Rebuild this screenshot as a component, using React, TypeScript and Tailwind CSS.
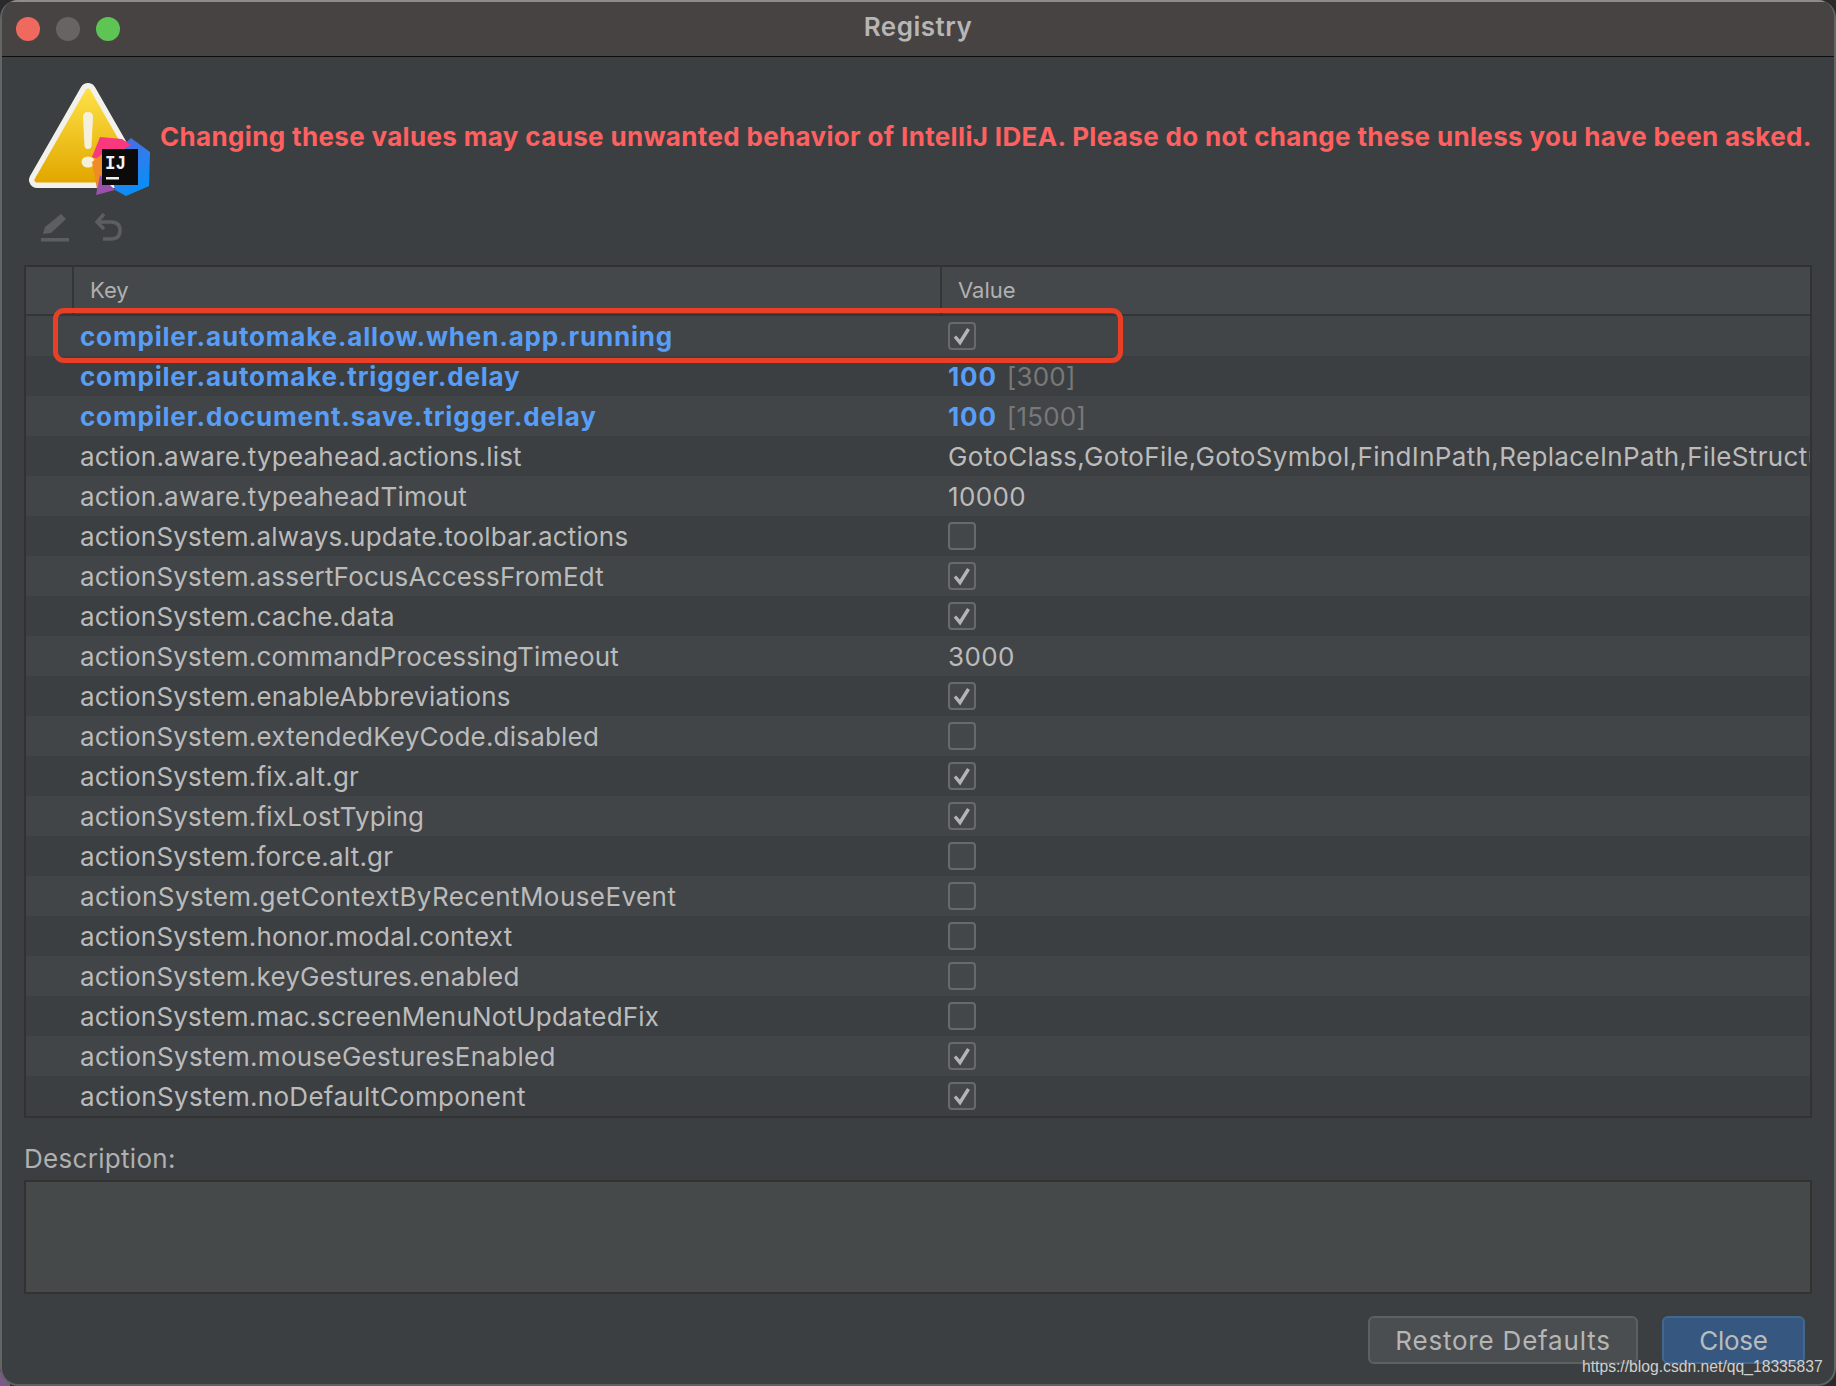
import React from 'react';

// Rows of the registry table
type Row = { key: string; value?: string; checked?: boolean; modified?: boolean; original?: string; track?: string };

const rows: Row[] = [
  { key: 'compiler.automake.allow.when.app.running', checked: true, modified: true },
  { key: 'compiler.automake.trigger.delay', value: '100', original: '[300]', modified: true },
  { key: 'compiler.document.save.trigger.delay', value: '100', original: '[1500]', modified: true },
  { key: 'action.aware.typeahead.actions.list', value: 'GotoClass,GotoFile,GotoSymbol,FindInPath,ReplaceInPath,FileStructurePopup' },
  { key: 'action.aware.typeaheadTimout', value: '10000' },
  { key: 'actionSystem.always.update.toolbar.actions', checked: false },
  { key: 'actionSystem.assertFocusAccessFromEdt', checked: true },
  { key: 'actionSystem.cache.data', checked: true },
  { key: 'actionSystem.commandProcessingTimeout', value: '3000' },
  { key: 'actionSystem.enableAbbreviations', checked: true },
  { key: 'actionSystem.extendedKeyCode.disabled', checked: false },
  { key: 'actionSystem.fix.alt.gr', checked: true },
  { key: 'actionSystem.fixLostTyping', checked: true },
  { key: 'actionSystem.force.alt.gr', checked: false },
  { key: 'actionSystem.getContextByRecentMouseEvent', checked: false, track: 'tracking-[0.43px]' },
  { key: 'actionSystem.honor.modal.context', checked: false },
  { key: 'actionSystem.keyGestures.enabled', checked: false },
  { key: 'actionSystem.mac.screenMenuNotUpdatedFix', checked: false },
  { key: 'actionSystem.mouseGesturesEnabled', checked: true, track: 'tracking-[0.3px]' },
  { key: 'actionSystem.noDefaultComponent', checked: true, track: 'tracking-[0.3px]' },
];

const Checkbox = ({ checked }: { checked: boolean }) => (
  <div className="w-[28px] h-[28px] rounded-[4px] border-2 border-[#676a6b] bg-[#43474a] flex items-center justify-center">
    {checked && (
      <svg width="20" height="20" viewBox="0 0 20 20" fill="none">
        <path d="M3 10.5 L8 16.5 L16.5 3" stroke="#b4b4b4" strokeWidth="3.4" />
      </svg>
    )}
  </div>
);

// Drawn in page coordinates, so the numbers can be read off the reference
const WarningIcon = () => (
  <svg width="124" height="120" viewBox="28 80 124 120" className="shrink-0">
    <defs>
      <linearGradient id="warn" x1="0" y1="0" x2="0" y2="1">
        <stop offset="0" stopColor="#fee045" />
        <stop offset="1" stopColor="#e2a800" />
      </linearGradient>
      <linearGradient id="hex" x1="0" y1="0" x2="0.5" y2="1">
        <stop offset="0" stopColor="#5b62d6" />
        <stop offset="0.6" stopColor="#2a80ee" />
        <stop offset="1" stopColor="#0a8df7" />
      </linearGradient>
    </defs>
    <polygon points="88,92 37,181 139,181" fill="#f3f1ec" stroke="#f3f1ec" strokeWidth="16" strokeLinejoin="round" />
    <polygon points="88,92 37,181 139,181" fill="url(#warn)" stroke="url(#warn)" strokeWidth="5" strokeLinejoin="round" />
    <path d="M83 118 Q83 113 88 113 Q93 113 93 118 L91.5 147 Q91 150 88 150 Q85 150 84.5 147 Z" fill="#f5f0dc" />
    <ellipse cx="88" cy="163" rx="6.5" ry="5.5" fill="#f5f0dc" />
    <polygon points="131,139 150,153 149,187 126,197 115,191 108,160" fill="url(#hex)" />
    <polygon points="92,158 100,138 122,140 131,146 116,155 102,162" fill="#f9387f" />
    <polygon points="92,163 102,155 104,182 97,190" fill="#f08c28" />
    <polygon points="96,196 100,176 115,191" fill="#9b50ae" />
    <rect x="102" y="150" width="36" height="36" fill="#0b0b0b" />
    <text x="105" y="170" fontFamily="'Liberation Mono', monospace" fontWeight="700" fontSize="21" textLength="21" lengthAdjust="spacingAndGlyphs" fill="#f2f2f2">IJ</text>
    <rect x="106" y="178" width="13" height="2.5" fill="#f2f2f2" />
  </svg>
);

export default function App() {
  return (
    <div className="w-[1836px] h-[1386px] bg-[#2a2a2c] font-['Inter','Noto_Sans',sans-serif] text-[#bbbbbb] overflow-hidden relative">
      <div className="absolute left-0 bottom-0 w-[10px] h-[14px] bg-[#7a5a8a]" />
      <div className="relative w-full h-full rounded-[18px] overflow-hidden border-2 border-t-0 border-[#626465] border-b-[#5d5f60] bg-[#3c3f41] flex flex-col">
        {/* Title bar */}
        <div className="h-[57px] shrink-0 bg-[#484343] border-t-2 border-[#8d8c8c] border-b border-b-[#0d0d0d] flex items-center relative">
          <div className="flex gap-[16px] pl-[14px]">
            <div className="w-[24px] h-[24px] rounded-full bg-[#f0695e]" />
            <div className="w-[24px] h-[24px] rounded-full bg-[#686464]" />
            <div className="w-[24px] h-[24px] rounded-full bg-[#5ec453]" />
          </div>
          <div className="absolute inset-x-0 top-[7px] text-center text-[26px] leading-[36px] font-semibold tracking-[0.5px] text-[#b8b5b5]">Registry</div>
        </div>

        {/* Warning */}
        <div className="flex items-center pl-[26px] pt-[15px] h-[148px] shrink-0">
          <WarningIcon />
          <div className="ml-[8px] mb-[4px] text-[26px] font-bold text-[#ff6060] whitespace-nowrap tracking-[0.34px]">
            Changing these values may cause unwanted behavior of IntelliJ IDEA. Please do not change these unless you have been asked.
          </div>
        </div>

        {/* Toolbar */}
        <div className="h-[60px] shrink-0 flex items-start pl-[38px] pt-[8px] gap-[24px]">
          <svg width="30" height="30" viewBox="0 0 30 30" fill="#5c5e5f">
            <path d="M21 1 L26 6 L11 20 L3 21 L5 14 Z" />
            <rect x="1" y="25" width="28" height="3.5" />
          </svg>
          <svg width="28" height="30" viewBox="0 0 28 30" fill="none" stroke="#5c5e5f" strokeWidth="3.5">
            <path d="M10 1 L3 9 L10 16" />
            <path d="M4 9 H17 Q26 9 26 17.5 Q26 26 17 26 H9" />
          </svg>
        </div>

        {/* Table */}
        <div className="ml-[22px] w-[1788px] shrink-0 border-2 border-[#323232]">
          <div className="h-[49px] bg-[#45484b] border-b-2 border-[#343536] flex text-[22px] text-[#b0b0b0]">
            <div className="w-[48px] h-full border-r-2 border-[#343536]" />
            <div className="w-[868px] h-full border-r-2 border-[#343536] flex items-center pl-[16px]">Key</div>
            <div className="flex-1 flex items-center pl-[16px]">Value</div>
          </div>
          {rows.map((row, i) => (
            <div
              key={row.key}
              className={`h-[40px] flex items-center text-[26px] whitespace-nowrap ${row.modified ? 'tracking-[0.82px]' : 'tracking-[0.2px]'} ${i % 2 === 0 ? 'bg-[#414548]' : 'bg-[#3c3f41]'}`}
            >
              <div className={`w-[922px] pl-[54px] shrink-0 ${row.track ?? ''} ${row.modified ? 'font-bold text-[#589df6]' : ''}`}>{row.key}</div>
              <div className="flex-1 overflow-hidden flex items-center">
                {row.checked !== undefined ? (
                  <Checkbox checked={row.checked} />
                ) : (
                  <span className={row.modified ? '' : 'tracking-[0.35px]'}>
                    <span className={row.modified ? 'font-bold text-[#589df6]' : ''}>{row.value}</span>
                    {row.original && <span className="ml-[10px] tracking-[0.2px] text-[#787878]">{row.original}</span>}
                  </span>
                )}
              </div>
            </div>
          ))}
        </div>

        {/* Description */}
        <div className="ml-[22px] mt-[23px] text-[26px] tracking-[0.3px] leading-[36px] text-[#b0b0b0]">Description:</div>
        <div className="ml-[22px] mt-[3px] w-[1788px] h-[114px] shrink-0 bg-[#464949] border-2 border-[#323232]" />

        {/* Buttons */}
        <div className="flex justify-end gap-[24px] pr-[29px] mt-[22px]">
          <button className="w-[270px] h-[48px] rounded-[6px] border-2 border-[#5e6060] bg-[#4b4e50] text-[26px] tracking-[0.8px] text-[#b5b5b5]">Restore Defaults</button>
          <button className="w-[143px] h-[48px] rounded-[6px] border-2 border-[#41688f] bg-[#365880] text-[26px] tracking-[-0.3px] text-[#bbbbbb]">Close</button>
        </div>
      </div>

      {/* CSDN watermark */}
      <div className="absolute left-[1582px] top-[1356px] text-[15.7px] leading-[22px] font-['Liberation_Sans',sans-serif] text-[#d0d0d0] whitespace-nowrap">https://blog.csdn.net/qq_18335837</div>

      {/* Red annotation box */}
      <div className="absolute left-[53px] top-[308px] w-[1070px] h-[55px] rounded-[11px] border-[5px] border-[#e93f26]" />
    </div>
  );
}
